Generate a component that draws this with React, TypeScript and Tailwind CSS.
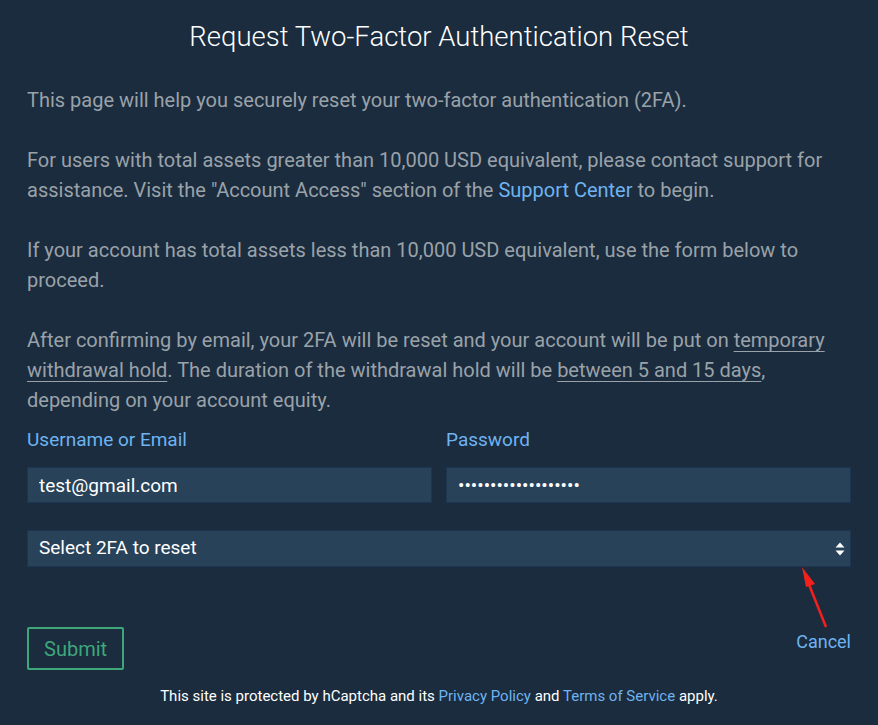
import { useState } from "react";

const Underlined = ({ children }: { children: React.ReactNode }) => (
  <span className="underline underline-offset-4 decoration-1">{children}</span>
);

const App = () => {
  const [email, setEmail] = useState("test@gmail.com");
  const [password, setPassword] = useState("passwordpassword123");

  return (
    <div className="relative min-h-[725px] bg-[#1a2c3e] font-['Roboto',sans-serif] px-[27px]">
      {/* header */}
      <h1 className="pt-[19px] text-center text-[27.5px] leading-[36px] font-light text-white">
        Request Two-Factor Authentication Reset
      </h1>

      {/* info text */}
      <div className="mt-[30px] text-[20px] leading-[30px] text-[#9aa2a9] space-y-[30px]">
        <p>This page will help you securely reset your two-factor authentication (2FA).</p>
        <p>
          For users with total assets greater than 10,000 USD equivalent, please contact support for
          assistance. Visit the "Account Access" section of the{" "}
          <a href="#" className="text-[#6fb3f0]">Support Center</a> to begin.
        </p>
        <p>
          If your account has total assets less than 10,000 USD equivalent, use the form below to
          proceed.
        </p>
        <p>
          After confirming by email, your 2FA will be reset and your account will be put on{" "}
          <Underlined>temporary withdrawal hold</Underlined>. The duration of the withdrawal hold will
          be <Underlined>between 5 and 15 days</Underlined>, depending on your account equity.
        </p>
      </div>

      {/* form */}
      <form className="mt-[10px]" onSubmit={(e) => e.preventDefault()}>
        <div className="grid grid-cols-2 gap-[14px]">
          <label className="block">
            <span className="block text-[19px] leading-[30px] text-[#6fb3f0]">Username or Email</span>
            <input
              value={email}
              onChange={(e) => setEmail(e.target.value)}
              className="mt-[12px] block w-full h-[36px] px-[11px] bg-[#274259] border border-[#1d3550] text-white text-[19px] outline-none"
            />
          </label>
          <label className="block">
            <span className="block text-[19px] leading-[30px] text-[#6fb3f0]">Password</span>
            <input
              type="password"
              value={password}
              onChange={(e) => setPassword(e.target.value)}
              className="mt-[12px] block w-full h-[36px] px-[11px] bg-[#274259] border border-[#1d3550] text-white text-[19px] outline-none"
            />
          </label>
        </div>

        <div className="relative mt-[27px]">
          <select className="block w-full h-[37px] pl-[11px] pr-8 appearance-none bg-[#274259] border border-[#1d3550] text-white text-[19px] outline-none">
            <option>Select 2FA to reset</option>
            <option>Authenticator App</option>
            <option>Security Key</option>
          </select>
          <svg
            className="pointer-events-none absolute right-[6px] top-1/2 -translate-y-1/2"
            width="10"
            height="14"
            viewBox="0 0 10 14"
            fill="white"
          >
            <path d="M5 0.5 L9.5 5.5 H0.5 Z" />
            <path d="M5 13.5 L9.5 8.5 H0.5 Z" />
          </svg>
        </div>

        <div className="mt-[60px] flex items-end justify-between">
          <button
            type="submit"
            className="h-[43px] px-[15px] border-2 border-[#3ea77a] rounded-[2px] text-[#3ea77a] text-[20px]"
          >
            Submit
          </button>
          <a href="#" className="mb-[13px] text-[18px] leading-[30px] text-[#6fb3f0]">Cancel</a>
        </div>
      </form>

      <p className="mt-[16px] pb-[20px] text-center text-[15px] leading-[20px] text-white">
        This site is protected by hCaptcha and its{" "}
        <a href="#" className="text-[#6fb3f0]">Privacy Policy</a> and{" "}
        <a href="#" className="text-[#6fb3f0]">Terms of Service</a> apply.
      </p>

      {/* annotation arrow */}
      <svg className="pointer-events-none absolute left-0 top-0" width="878" height="725">
        <line x1="826" y1="627" x2="808" y2="582" stroke="#f5201b" strokeWidth="2.5" />
        <path d="M802 567 L815 584 L806 587 Z" fill="#f5201b" />
      </svg>
    </div>
  );
};

export default App;
